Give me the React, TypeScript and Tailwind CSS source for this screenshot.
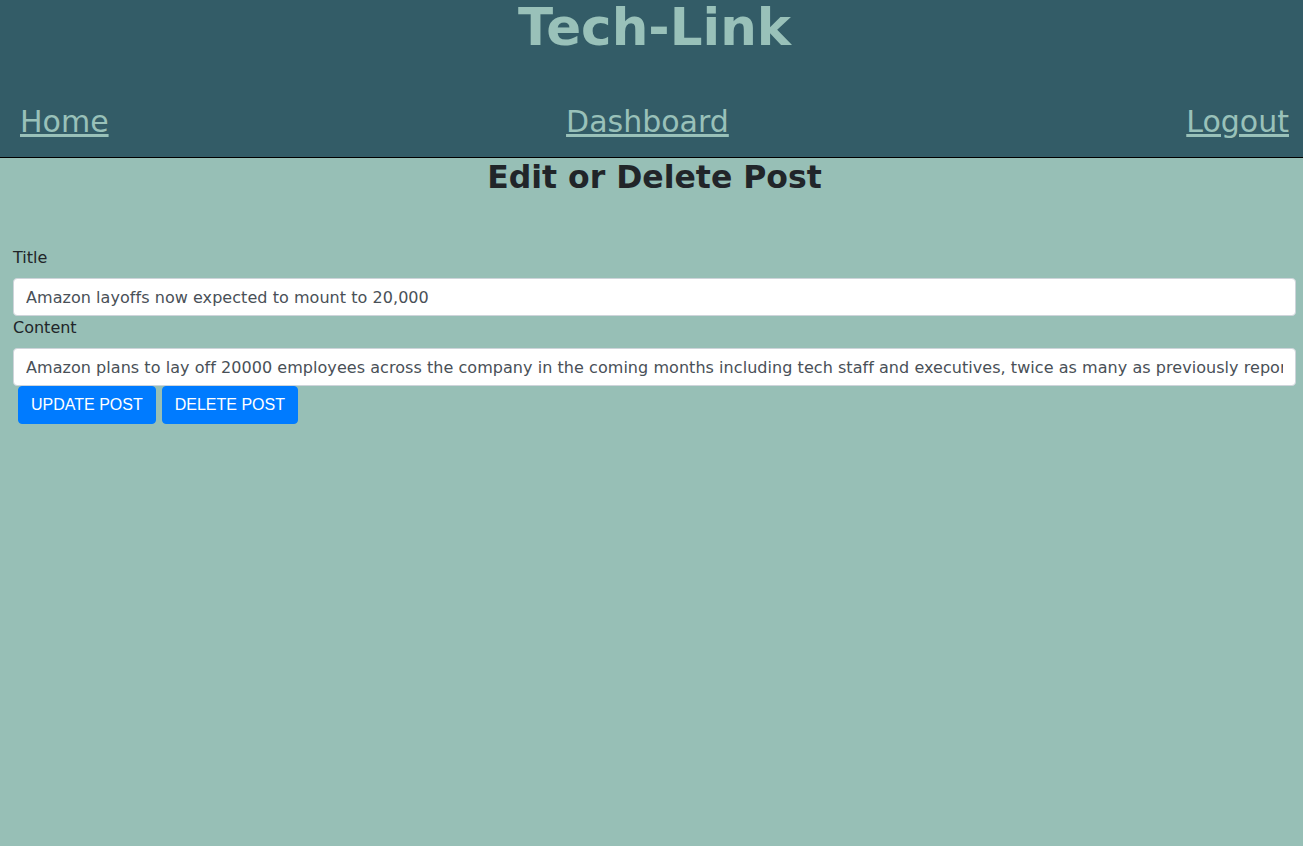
export default function App() {
  const verdana = "font-['DejaVu_Sans',Verdana,sans-serif]";

  return (
    <div className={`min-h-screen bg-[#97bfb6] text-[#212529] ${verdana}`}>
      <header className="bg-[#335c67] border-b border-black pb-[13px]">
        <h1 className="pl-[6px] text-center text-[51.5px] font-bold leading-[55px] text-[#99c1b9]">
          Tech-Link
        </h1>
        <nav className="mt-[44px] flex justify-between pl-[20px] pr-[14px] text-[30px] leading-[45px] text-[#99c1b9]">
          <a href="#" className="underline">
            Home
          </a>
          <a href="#" className="underline">
            Dashboard
          </a>
          <a href="#" className="underline">
            Logout
          </a>
        </nav>
      </header>

      <main>
        <h2 className="pl-[6px] text-center text-[31.5px] font-bold leading-[38px]">
          Edit or Delete Post
        </h2>

        <form className="mt-[50px] pl-[13px] pr-[7px]">
          <label className="mb-2 block text-base leading-6">Title</label>
          <input
            type="text"
            defaultValue="Amazon layoffs now expected to mount to 20,000"
            className="block h-[38px] w-full rounded border border-[#ced4da] bg-white px-3 text-base tracking-[0.05px] text-[#495057] outline-none"
          />
          <label className="mb-2 block text-base leading-6">Content</label>
          <input
            type="text"
            defaultValue="Amazon plans to lay off 20000 employees across the company in the coming months including tech staff and executives, twice as many as previously reported"
            className="block h-[38px] w-full rounded border border-[#ced4da] bg-white px-3 text-base tracking-[0.05px] text-[#495057] outline-none"
          />
          <div className="ml-[5px] flex gap-[6px]">
            <button
              type="button"
              className="h-[38px] rounded border border-[#007bff] bg-[#007bff] px-3 font-['Liberation_Sans',Arial,sans-serif] text-base text-white"
            >
              UPDATE POST
            </button>
            <button
              type="button"
              className="h-[38px] rounded border border-[#007bff] bg-[#007bff] px-3 font-['Liberation_Sans',Arial,sans-serif] text-base text-white"
            >
              DELETE POST
            </button>
          </div>
        </form>
      </main>
    </div>
  );
}
